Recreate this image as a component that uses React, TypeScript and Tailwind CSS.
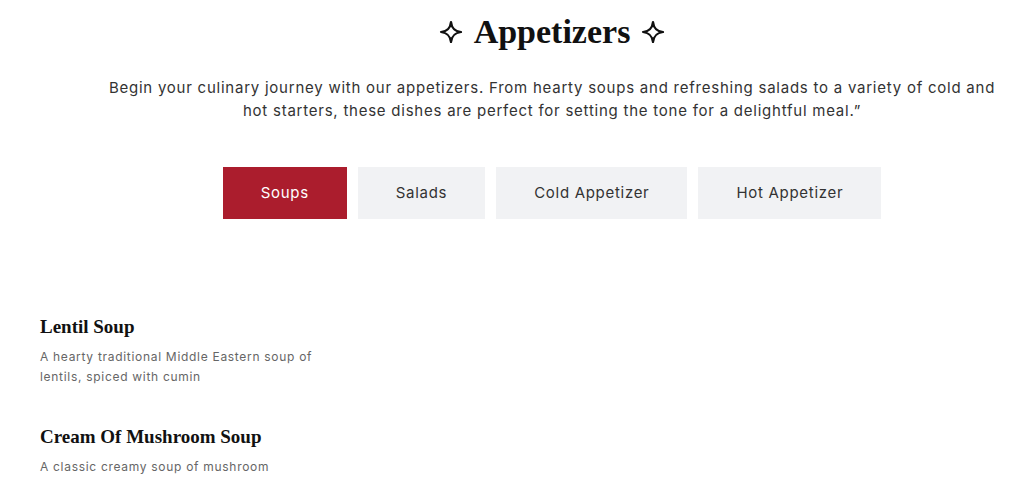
import { useState } from "react"

const tabs = ["Soups", "Salads", "Cold Appetizer", "Hot Appetizer"]

const items = [
  { name: "Lentil Soup", desc: "A hearty traditional Middle Eastern soup of lentils, spiced with cumin" },
  { name: "Cream Of Mushroom Soup", desc: "A classic creamy soup of mushroom" },
]

function Sparkle() {
  return (
    <svg width="24" height="24" viewBox="0 0 24 24" fill="none" stroke="#111" strokeWidth="2.2" strokeLinejoin="round">
      <path d="M12 2 C12.8 8.5 15.5 11.2 22 12 C15.5 12.8 12.8 15.5 12 22 C11.2 15.5 8.5 12.8 2 12 C8.5 11.2 11.2 8.5 12 2 Z" />
    </svg>
  )
}

export default function App() {
  const [active, setActive] = useState("Soups")
  const serif = { fontFamily: '"Liberation Serif", "DejaVu Serif", serif' }
  const sans = { fontFamily: 'Inter, "Open Sans", sans-serif' }

  return (
    <div className="min-h-screen bg-white" style={sans}>
      {/* Header */}
      <section className="pl-[80px] pt-[11px]">
        <div className="flex flex-col items-center">
          <h2 className="flex items-center gap-[11px] text-[34px] font-bold text-[#111] leading-[42px]" style={serif}>
            <Sparkle />
            <span>Appetizers</span>
            <Sparkle />
          </h2>
          <p className="mt-[23px] max-w-[900px] text-center text-[15px] leading-[23px] tracking-[0.76px] text-[#333]">
            Begin your culinary journey with our appetizers. From hearty soups and refreshing salads to a variety of cold and hot starters, these dishes are perfect for setting the tone for a delightful meal.”
          </p>
          <div className="mt-[45px] flex gap-[11px]">
            {tabs.map((t) => (
              <button
                key={t}
                onClick={() => setActive(t)}
                className={
                  t === active
                    ? "h-[52px] px-[38px] text-[15px] tracking-[0.7px] bg-[#ab1d2d] text-white"
                    : "h-[52px] px-[38px] text-[15px] tracking-[0.7px] bg-[#f1f2f4] text-[#333]"
                }
              >
                {t}
              </button>
            ))}
          </div>
        </div>
      </section>

      {/* Items */}
      <section className="pl-[40px] pt-[96px]">
        <div className="flex flex-col gap-[38px] w-[300px]">
          {items.map((it) => (
            <div key={it.name}>
              <h3 className="text-[19px] font-bold text-[#111] leading-[24px]" style={serif}>{it.name}</h3>
              <p className="mt-[8px] text-[12px] leading-[20px] tracking-[0.7px] text-[#666]">{it.desc}</p>
            </div>
          ))}
        </div>
      </section>
    </div>
  )
}
